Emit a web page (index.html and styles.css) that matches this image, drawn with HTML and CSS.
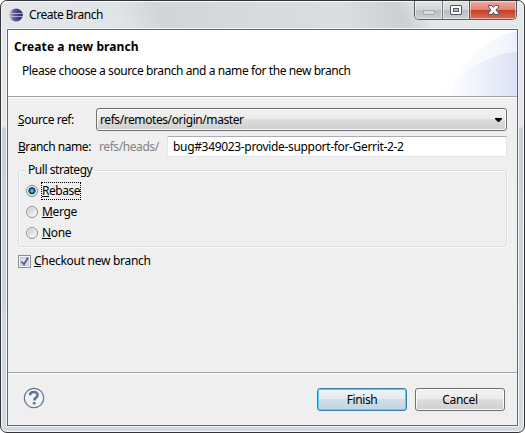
FILE: index.html
```html
<!DOCTYPE html>
<html lang="en">
<head>
<meta charset="utf-8">
<title>Create Branch</title>
<link rel="stylesheet" href="styles.css">
</head>
<body>
<div class="window">
  <header class="titlebar">
    <svg class="app-icon" width="14" height="14" viewBox="0 0 14 14">
      <defs><linearGradient id="orb"><stop offset="0" stop-color="#e3b5cd"/><stop offset=".35" stop-color="#625b9c"/><stop offset="1" stop-color="#29256b"/></linearGradient></defs>
      <ellipse cx="7" cy="7" rx="6.8" ry="6.4" fill="url(#orb)"/>
      <path d="M1 5.500h12.500M.5 8.500h13" stroke="#c4c9e8" stroke-width=".8"/>
    </svg>
    <span class="title">Create Branch</span>
    <div class="controls">
      <span class="ctl min"><svg width="28" height="18"><rect x="8.500" y="9.500" width="11" height="4" rx=".5" fill="#d7d9dc" stroke="#a5a7ac"/></svg></span>
      <span class="ctl max"><svg width="26" height="18"><rect x="7.500" y="4.500" width="11" height="9" rx=".5" fill="#fff" stroke="#535666"/><rect x="10.500" y="7.500" width="5" height="3" fill="#b9bdc5" stroke="#535666"/></svg></span>
      <span class="ctl close"><svg width="46" height="18"><path d="M18.500 4.500h3.500l1.500 2 1.500-2h3.500v1.500L26 9l2.500 3v1.500H25l-1.500-2-1.500 2h-3.500V12L21 9l-2.500-3z" fill="#fff" stroke="#555666"/></svg></span>
    </div>
  </header>
  <main class="client">
    <section class="banner">
      <h1 class="heading">Create a new branch</h1>
      <p class="message">Please choose a source branch and a name for the new branch</p>
      <svg class="banner-art" width="75" height="66" viewBox="0 0 75 66">
        <defs>
          <linearGradient id="pale"><stop offset="0" stop-color="#fff"/><stop offset="1" stop-color="#e9eefa"/></linearGradient>
          <linearGradient id="deep"><stop offset="0" stop-color="#fff"/><stop offset=".35" stop-color="#f3f6fd"/><stop offset="1" stop-color="#dbe2f6"/></linearGradient>
        </defs>
        <path d="M2 66C19 32 43 7 75 1V66z" fill="url(#pale)" opacity=".65"/>
        <path d="M39 36C49 17 61 5 75 1V66H39z" fill="url(#pale)" opacity=".75"/>
        <path d="M2 66C24 36 50 24 75 22V66z" fill="url(#deep)"/>
      </svg>
    </section>
    <form class="body">
      <div class="row source">
        <label class="t-source"><u>S</u>ource ref:</label>
        <div class="combo"><span class="t-ref">refs/remotes/origin/master</span><svg width="7" height="4"><path d="M0 0h7v1L4 4H3L0 1z"/></svg></div>
      </div>
      <div class="row name">
        <label class="t-name"><u>B</u>ranch name:</label>
        <span class="prefix">refs/heads/</span>
        <div class="field"><span class="t-bug">bug#349023-provide-support-for-Gerrit-2-2</span></div>
      </div>
      <fieldset class="group">
        <legend>Pull strategy</legend>
        <label class="option"><i class="radio checked"></i><span class="focus t-rebase"><u>R</u>ebase</span></label>
        <label class="option"><i class="radio"></i><span class="t-merge"><u>M</u>erge</span></label>
        <label class="option"><i class="radio"></i><span class="t-none"><u>N</u>one</span></label>
      </fieldset>
      <label class="check-row">
        <svg width="13" height="13"><rect x=".5" y=".5" width="12" height="12" fill="#f8f8f8" stroke="#8b8d90"/><rect x="2.500" y="2.500" width="8" height="8" fill="#dce0e5" stroke="#c3c8ce"/><path d="M3.500 6.500L6 9.500 10 2.500" fill="none" stroke="#4a5f97" stroke-width="1.800"/></svg>
        <span class="t-check"><u>C</u>heckout new branch</span>
      </label>
    </form>
    <footer class="footer">
      <svg class="help" width="22" height="22" viewBox="0 0 22 22"><circle cx="11" cy="11" r="9.700" fill="#f3f4f6" stroke="#637596" stroke-width="1.200"/><path d="M7 8.200C7.200 3.900 14.800 4 14.600 8.200 14.500 10.700 11.200 10.600 11.200 13.600" fill="none" stroke="#637596" stroke-width="2.600"/><rect x="9.800" y="15" width="2.800" height="2.600" rx=".6" fill="#637596"/></svg>
      <span class="button primary"><span class="t-finish">Finish</span></span>
      <span class="button"><span class="t-cancel">Cancel</span></span>
    </footer>
  </main>
</div>
</body>
</html>
```
FILE: styles.css
```css
* { box-sizing: border-box; }
body {
  margin: 0;
  width: 525px;
  height: 433px;
  overflow: hidden;
  background: #fff;
  color: #000;
  font: 12px/16px "Noto Sans", "Open Sans", sans-serif;
}
.window {
  width: 525px;
  height: 433px;
  padding: 0 6px 6px;
  border: 1px solid #333438;
  border-radius: 7px;
  background: linear-gradient(#e5e8eb 0, #e5e8eb 125px, #c9d0d7 128px, #d3d9df 100%);
  box-shadow: inset 0 0 0 1px #f4f6f8;
}
.titlebar {
  height: 28px;
  margin: 0 -5px;
  padding-left: 7px;
  display: flex;
  align-items: flex-start;
  border-radius: 6px 6px 0 0;
  background: linear-gradient(65deg, #e4e8eb 0, #e0e4e8 23%, #d0d5da 31%, #d4d9de 43%, #d9dee3 65%, #cbd0d5 76%, #e3e7ea 81%, #e6e9ec 100%);
  box-shadow: inset 0 1px #f8fafb;
}
.app-icon { margin-top: 7px; }
.title { margin: 6px auto 0 6px; white-space: nowrap; letter-spacing: -.45px; }
.controls {
  display: flex;
  width: 103px;
  height: 19px;
  margin-right: 6px;
  border: 1px solid #595b65;
  border-top: 0;
  border-radius: 0 0 5px 5px;
  overflow: hidden;
}
.ctl {
  height: 18px;
  box-shadow: inset 0 0 0 1px #ffffff80;
  background: linear-gradient(#e1e3e5 0, #d3d5d8 47%, #b9bdc2 50%, #cbd0d7 100%);
}
.ctl svg { display: block; }
.min { width: 27px; }
.max { width: 27px; border-left: 1px solid #777a84; }
.close { width: 47px; border-left: 1px solid #704450; background: linear-gradient(#efaaa2 0, #de8577 47%, #c43e24 50%, #d96b50 100%); }
.client {
  height: 397px;
  border: 1px solid #66696d;
  background: #efefef;
  display: flex;
  flex-direction: column;
  box-shadow: 0 0 0 1px #f1f4f6;
}
.banner {
  height: 67px;
  background: #fff;
  border-bottom: 1px solid #a0a0a0;
  padding: 9px 0 0 6px;
  position: relative;
  flex: none;
}
.heading { font-size: 12px; line-height: 16px; margin: 0; letter-spacing: .1px; }
.message { margin: 8px 0 0 8px; letter-spacing: -.41px; }
.banner-art { position: absolute; right: 0; top: 0; }
.heading, .message, .combo, .field, label, legend, .prefix { white-space: nowrap; }
.body { flex: 1; border-top: 1px solid #fff; padding: 10px 10px 0; }
.row { display: flex; align-items: center; }
u { text-decoration: none; border-bottom: 1px solid #000; display: inline-block; height: 14px; line-height: 16px; vertical-align: top; }
.source { height: 23px; }
.source label { width: 78px; }
.t-source { letter-spacing: -.42px; }
.t-ref { letter-spacing: -.42px; }
.combo {
  width: 411px;
  height: 23px;
  border: 1px solid #707070;
  border-radius: 3px;
  box-shadow: inset 0 0 0 1px #fafafa;
  background: linear-gradient(#f2f2f2 0, #ebebeb 49%, #dddddd 50%, #cfcfcf 100%);
  display: flex;
  align-items: center;
  justify-content: space-between;
  padding: 0 4px 0 3px;
}
.name { margin-top: 5px; height: 21px; }
.name label { width: 81px; }
.t-name { letter-spacing: -.45px; }
.prefix { width: 68px; color: #838383; letter-spacing: -.42px; }
.field { width: 340px; height: 21px; background: #fff; border: 1px solid #e2e5e9; border-top-color: #abadb3; border-radius: 1px; padding: 2px 0 0 5px; }
.t-bug { letter-spacing: -.33px; }
.group {
  margin: 5px 0 0;
  width: 489px;
  height: 85px;
  border: 1px solid #d5dfe5;
  border-radius: 3px;
  padding: 2px 7px 0;
  box-shadow: inset 1px 1px #fafafa, 1px 1px #fafafa;
}
legend { padding: 0 2px; line-height: 16px; letter-spacing: -.45px; }
.option { display: flex; align-items: center; height: 21px; }
.radio {
  width: 12px;
  height: 12px;
  border: 1px solid #909293;
  border-radius: 50%;
  background: linear-gradient(135deg, #bfc3c8, #f4f4f4 80%);
  box-shadow: inset 0 0 0 1px #f5f5f5;
  margin-right: 4px;
}
.checked { border-color: #7e8589; background: radial-gradient(circle at 50% 48%, #b4edfa 0, #299dc5 18%, #0c4267 38%, #153d5b 45%, #dce3e7 55%); }
.t-rebase { letter-spacing: -.45px; }
.t-merge, .t-none { letter-spacing: -.35px; }
.focus { outline: 1px dotted #000; }
.focus { outline-offset: 0; }
.check-row { display: flex; align-items: center; gap: 3px; margin-top: 6px; height: 16px; }
.t-check { letter-spacing: -.28px; }
.footer {
  height: 53px;
  flex: none;
  border-top: 1px solid #a0a0a0;
  box-shadow: inset 0 1px #fff;
  display: flex;
  padding: 15px 12px 0 15px;
  gap: 8px;
}
.help { margin: -1px auto 0 0; }
.button {
  width: 90px;
  height: 23px;
  display: flex;
  justify-content: center;
  align-items: center;
  border: 1px solid #707070;
  border-radius: 3px;
  box-shadow: inset 0 0 0 1px #fafafa;
  background: linear-gradient(#f2f2f2, #ebebeb 49%, #ddd 50%, #cfcfcf);
}
.primary { border-color: #3c7fb1; box-shadow: inset 0 0 0 1px #48d0f7; background: linear-gradient(#eef3f5, #e2ecf1 49%, #cfdfe8 50%, #c0d5e1); }
.t-finish { letter-spacing: -.4px; }
.t-cancel { letter-spacing: -.3px; }
```
